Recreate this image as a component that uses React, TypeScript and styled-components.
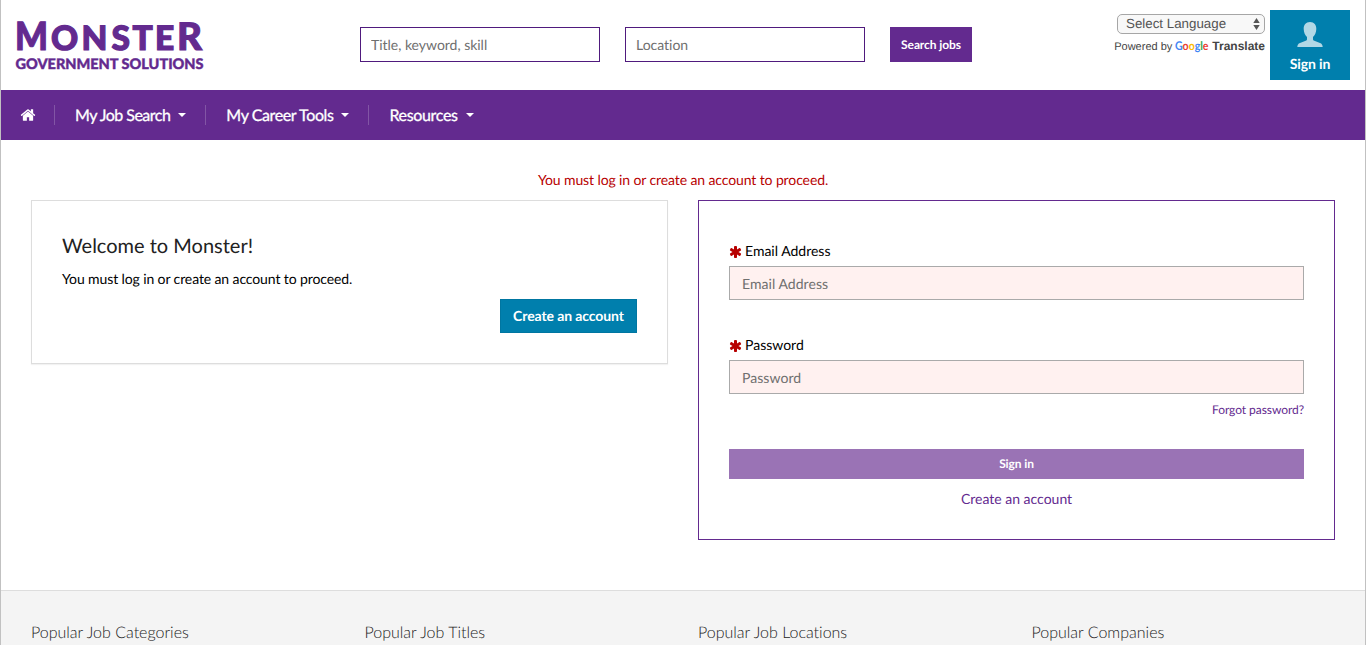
import React from "react";
import styled, { createGlobalStyle } from "styled-components";

const PURPLE = "#632a8f";
const BLUE = "#007fad";

const GlobalStyle = createGlobalStyle`
  * { box-sizing: border-box; }
  body { margin: 0; background: #fff; overflow: hidden; text-rendering: geometricPrecision; }
  body, input, button, select { font-family: Lato, "Liberation Sans", sans-serif; }
  input, button { text-rendering: geometricPrecision; }
  h2, h3, p { margin: 0; }
`;

const Page = styled.div`
  height: 645px;
  overflow: hidden;
  display: flex;
  flex-direction: column;
  border: solid #c1c1c1;
  border-width: 0 1px;
  color: #000;
  font-size: 14px;
`;

const Header = styled.header`
  height: 90px;
  flex: none;
  display: flex;
  align-items: flex-start;
  padding: 10px 15px 0 14px;
`;

const Logo = styled.svg`
  width: 190px;
  height: 54px;
  margin-top: 7px;
  flex: none;
  overflow: visible;
  fill: ${PURPLE};
  stroke: ${PURPLE};
  font-family: Lato, sans-serif;
  font-weight: 900;
`;

const SearchForm = styled.div`
  display: flex;
  margin: 17px auto 0 155px;
`;

const SearchInput = styled.input`
  width: 240px;
  height: 35px;
  margin-right: 25px;
  padding: 0 10px;
  border: 1px solid #4f1a7d;
  border-radius: 0;
  font-size: 14px;
  letter-spacing: -0.02px;
  &::placeholder { color: #6f6f6f; }
`;

const SearchButton = styled.button`
  width: 82px;
  height: 35px;
  padding: 0;
  border: 0;
  background: ${PURPLE};
  color: #fff;
  font-size: 12px;
  font-weight: 700;
  letter-spacing: -0.1px;
`;

const Translate = styled.div`
  display: flex;
  flex-direction: column;
  align-items: flex-end;
  margin: 4px 5px 0 0;
  font-family: "Liberation Sans", sans-serif;
`;

const LanguageSelect = styled.div`
  width: 148px;
  height: 20px;
  display: flex;
  align-items: center;
  justify-content: space-between;
  padding: 0 4px 0 8px;
  border: 1px solid #a6a6a6;
  border-radius: 5px;
  background: #f8f8f8;
  color: #555;
  font-size: 13.33px;
  line-height: 18px;
`;

const Powered = styled.div`
  display: flex;
  align-items: center;
  height: 16px;
  margin-top: 4px;
  color: #444;
  font-size: 11px;
  white-space: nowrap;
  padding-top: 1px;
  svg { margin: -1px 3px 0; }
  b { margin-top: -2px; font-size: 12px; }
`;

const SignInTile = styled.a`
  width: 80px;
  height: 70px;
  display: flex;
  flex-direction: column;
  align-items: center;
  background: ${BLUE};
  color: #fff;
  font-size: 14px;
  font-weight: 700;
  line-height: 20px;
  letter-spacing: -0.1px;
  svg { margin: 12px 0 7px; }
`;

const Nav = styled.nav`
  height: 50px;
  flex: none;
  display: flex;
  align-items: center;
  background: ${PURPLE};
`;

const NavItem = styled.a<{ $first?: boolean; $tracking?: number }>`
  display: flex;
  align-items: center;
  height: 20px;
  padding: 0 ${(p) => (p.$first ? "18px" : "19px")} 0 ${(p) => (p.$first ? "19px" : "20px")};
  border-left: ${(p) => (p.$first ? "0" : "1px solid #8255a5")};
  color: #fff;
  font-size: 16px;
  line-height: 20px;
  letter-spacing: ${(p) => p.$tracking ?? 0}px;
  -webkit-text-stroke: 0.3px #fff;
`;

const NavLabel = styled.span`
  padding-top: 2px;
`;

const Caret = styled.span`
  margin-left: 8px;
  border: 4px solid transparent;
  border-top-color: #fff;
  border-bottom: 0;
`;

const Alert = styled.p`
  padding-top: 30px;
  height: 60px;
  line-height: 20px;
  text-align: center;
  letter-spacing: -0.11px;
  color: #b70000;
`;

const Columns = styled.main`
  display: grid;
  grid-template-columns: 1fr 1fr;
  gap: 30px;
  align-items: start;
  height: 390px;
  padding: 0 30px;
`;

const WelcomeCard = styled.section`
  height: 164px;
  display: flex;
  flex-direction: column;
  padding: 30px;
  border: 1px solid #ddd;
  box-shadow: 0 1px 1px rgba(0, 0, 0, 0.05);
  line-height: 20px;
  p { letter-spacing: -0.11px; }
`;

const Title = styled.h2`
  margin: 5px 0 12px;
  color: #222;
  font-size: 20px;
  font-weight: 400;
  line-height: 21px;
`;

const CreateButton = styled.button`
  align-self: flex-end;
  width: 137px;
  height: 34px;
  margin-top: 10px;
  padding: 0 0 2px;
  border: 1px solid #0076a1;
  background: ${BLUE};
  color: #fff;
  font-size: 14px;
  font-weight: 700;
  letter-spacing: -0.1px;
`;

const LoginCard = styled.section`
  height: 340px;
  display: flex;
  flex-direction: column;
  padding: 39px 30px 0;
  border: 1px solid ${PURPLE};
`;

const Label = styled.label`
  display: flex;
  align-items: center;
  gap: 2px;
  height: 20px;
  margin-bottom: 6px;
  svg { margin-top: 3px; margin-left: -1px; }
`;

const Field = styled.input`
  height: 34px;
  flex: none;
  padding: 0 12px;
  border: 1px solid #aaa;
  border-radius: 0;
  background: #fff1f0;
  font-size: 14px;
  letter-spacing: 0.05px;
  &::placeholder { color: #6f6f6f; }
  & + label { margin-top: 34px; }
`;

const TextLink = styled.a<{ $small?: boolean }>`
  align-self: ${(p) => (p.$small ? "flex-end" : "center")};
  margin-top: ${(p) => (p.$small ? "6px" : "10px")};
  color: ${PURPLE};
  font-size: ${(p) => (p.$small ? "12px" : "14px")};
  letter-spacing: ${(p) => (p.$small ? "-0.06px" : "0")};
  line-height: 20px;
`;

const SubmitButton = styled.button`
  height: 30px;
  margin-top: 29px;
  padding: 0 0 2px;
  border: 0;
  background: #9a73b5;
  color: #fff;
  font-size: 12px;
  font-weight: 700;
  letter-spacing: -0.1px;
`;

const Footer = styled.footer`
  flex: none;
  height: 55px;
  display: grid;
  grid-template-columns: repeat(4, 333.5px);
  padding: 32px 0 0 30px;
  border-top: 1px solid #ddd;
  background: #f4f4f4;
`;

const FooterTitle = styled.h3`
  color: #222;
  font-size: 16px;
  font-weight: 300;
  font-variant-ligatures: none;
  line-height: 20px;
`;

const HomeIcon = () => (
  <svg width="16" height="16" viewBox="0 0 1792 1792" fill="#fff">
    <path d="M1472 992v480q0 26-19 45t-45 19h-384v-384h-256v384h-384q-26 0-45-19t-19-45v-480q0-1 .5-3t.5-3l575-474 575 474q1 2 1 6zm223-69l-62 74q-8 9-21 11h-3q-13 0-21-7l-692-577-692 577q-12 8-24 7-13-2-21-11l-62-74q-8-10-7-23.5t11-21.5l719-599q32-26 76-26t76 26l244 204v-195q0-14 9-23t23-9h192q14 0 23 9t9 23v408l219 182q10 8 11 21.5t-7 23.5z" />
  </svg>
);

const Required = () => (
  <svg width="15" height="14" viewBox="-64 0 1920 1792" fill="#b70000">
    <path d="M1546 1050q46 26 59.5 77.5t-12.5 97.5l-64 110q-26 46-77.5 59.5t-97.5-12.5l-266-153v307q0 52-38 90t-90 38h-128q-52 0-90-38t-38-90v-307l-266 153q-46 26-97.5 12.5t-77.5-59.5l-64-110q-26-46-12.5-97.5t59.5-77.5l266-154-266-154q-46-26-59.5-77.5t12.5-97.5l64-110q26-46 77.5-59.5t97.5 12.5l266 153v-307q0-52 38-90t90-38h128q52 0 90 38t38 90v307l266-153q46-26 97.5-12.5t77.5 59.5l64 110q26 46 12.500 97.500t-59.500 77.500l-266 154z" />
  </svg>
);

const PersonIcon = () => (
  <svg width="26" height="25" viewBox="0 0 26 25" fill="#b2d8e6">
    <path d="M13 0C8.800 0 6.600 3 6.700 7c.1 3.700 1.400 6.300 3.300 8v2.200c0 .8-.5 1.300-1.300 1.600L3 21c-1.800.7-2.500 1.700-2.700 4h25.400c-.2-2.300-.9-3.300-2.700-4l-5.700-2.200c-.8-.3-1.300-.8-1.300-1.600V15c1.900-1.700 3.200-4.300 3.300-8C19.400 3 17.200 0 13 0z" />
  </svg>
);

const GoogleWord = () => (
  <svg width="34" height="15" viewBox="0 0 34 15" fontFamily="Lato, sans-serif" fontSize="12" fontWeight="700">
    <text x="0" y="10.500" textLength="33.500" lengthAdjust="spacingAndGlyphs">
      <tspan fill="#4285f4">G</tspan>
      <tspan fill="#ea4335">o</tspan>
      <tspan fill="#fbbc05">o</tspan>
      <tspan fill="#4285f4">g</tspan>
      <tspan fill="#34a853">l</tspan>
      <tspan fill="#ea4335">e</tspan>
    </text>
  </svg>
);

const MENUS = [
  { label: "My Job Search", tracking: -0.5 },
  { label: "My Career Tools", tracking: -0.4 },
  { label: "Resources", tracking: -0.35 },
];
const FOOTER = ["Popular Job Categories", "Popular Job Titles", "Popular Job Locations", "Popular Companies"];
const MESSAGE = "You must log in or create an account to proceed.";

export default function App() {
  return (
    <>
      <GlobalStyle />
      <Page>
        <Header>
          <Logo viewBox="0 0 190 54">
            <text x="0" y="32.600" fontSize="39" textLength="33" lengthAdjust="spacingAndGlyphs" strokeWidth="1.100">M</text>
            <text x="36 66.500 96.500 117.500 140" y="32.600" fontSize="33.500" strokeWidth="1.200">ONSTE</text>
            <text x="162" y="32.600" fontSize="38" textLength="25" lengthAdjust="spacingAndGlyphs" strokeWidth="1.100">R</text>
            <text x="0.500" y="51.500" fontSize="14.600" textLength="188" lengthAdjust="spacingAndGlyphs" strokeWidth="0.400">GOVERNMENT SOLUTIONS</text>
          </Logo>
          <SearchForm>
            <SearchInput placeholder="Title, keyword, skill" />
            <SearchInput placeholder="Location" />
            <SearchButton>Search jobs</SearchButton>
          </SearchForm>
          <Translate>
            <LanguageSelect>
              Select Language
              <svg width="7" height="12" viewBox="0 0 7 12" fill="#555">
                <path d="M3.500 0L6.700 5H.3zM3.500 12L.3 7h6.400z" />
              </svg>
            </LanguageSelect>
            <Powered>
              Powered by <GoogleWord /> <b>Translate</b>
            </Powered>
          </Translate>
          <SignInTile>
            <PersonIcon />
            Sign in
          </SignInTile>
        </Header>
        <Nav>
          <NavItem $first>
            <HomeIcon />
          </NavItem>
          {MENUS.map((m) => (
            <NavItem key={m.label} $tracking={m.tracking}>
              <NavLabel>{m.label}</NavLabel>
              <Caret />
            </NavItem>
          ))}
        </Nav>
        <Alert>{MESSAGE}</Alert>
        <Columns>
          <WelcomeCard>
            <Title>Welcome to Monster!</Title>
            <p>{MESSAGE}</p>
            <CreateButton>Create an account</CreateButton>
          </WelcomeCard>
          <LoginCard>
            <Label>
              <Required />
              Email Address
            </Label>
            <Field placeholder="Email Address" />
            <Label>
              <Required />
              Password
            </Label>
            <Field type="password" placeholder="Password" />
            <TextLink $small>Forgot password?</TextLink>
            <SubmitButton>Sign in</SubmitButton>
            <TextLink>Create an account</TextLink>
          </LoginCard>
        </Columns>
        <Footer>
          {FOOTER.map((f) => (
            <FooterTitle key={f}>{f}</FooterTitle>
          ))}
        </Footer>
      </Page>
    </>
  );
}
